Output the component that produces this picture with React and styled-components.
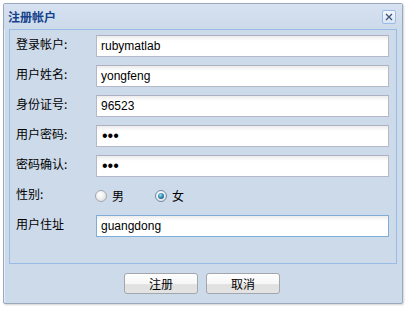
import React from 'react';
import styled, { createGlobalStyle } from 'styled-components';

const GlobalStyle = createGlobalStyle`
  html, body {
    margin: 0;
    padding: 0;
    background: #ffffff;
  }
  body {
    font-family: "Liberation Sans", "Noto Sans CJK SC", sans-serif;
    font-size: 12px;
  }
`;

const Window = styled.div`
  box-sizing: border-box;
  margin: 3px;
  width: 400px;
  height: 301px;
  border: 1px solid #9aa9bd;
  border-radius: 2px;
  background: #cddaea;
  box-shadow: inset 1px 1px 0 #e4ecf6, 1px 1px 2px rgba(0, 0, 0, 0.18);
  display: flex;
  flex-direction: column;
`;

const Header = styled.div`
  height: 25px;
  display: flex;
  align-items: center;
  justify-content: space-between;
  padding: 0 6px 0 4px;
  background: linear-gradient(#d6e2f1, #cddaea);
`;

const Title = styled.span`
  font-family: "Noto Sans CJK SC", sans-serif;
  font-weight: bold;
  font-size: 12px;
  color: #15428b;
  line-height: 14px;
`;

const CloseButton = styled.button`
  box-sizing: border-box;
  width: 14px;
  height: 14px;
  padding: 0;
  margin-top: 1px;
  border: 1px solid #99bbe8;
  border-radius: 2px;
  background: linear-gradient(#f4f8fd, #dbe6f4);
  display: flex;
  align-items: center;
  justify-content: center;
`;

const Body = styled.div`
  padding: 0 5px;
`;

const Panel = styled.div`
  box-sizing: border-box;
  height: 235px;
  border: 1px solid #99bbe8;
  padding: 5px 7px 0 6px;
  display: flex;
  flex-direction: column;
  gap: 8px;
`;

const Row = styled.div`
  display: grid;
  grid-template-columns: 80px 1fr;
  height: 22px;
`;

const Label = styled.label`
  font-family: "Noto Sans CJK SC", sans-serif;
  font-size: 12px;
  line-height: 14px;
  padding-top: 2px;
  color: #000;
`;

const Input = styled.input`
  box-sizing: border-box;
  width: 100%;
  height: 22px;
  margin: 0;
  padding: 0 4px;
  border: 1px solid ${(p) => (p.$focus ? '#7eadd9' : '#b5b8c8')};
  border-top-color: ${(p) => (p.$focus ? '#7eadd9' : '#adb0c0')};
  background: linear-gradient(#ececec 0, #ffffff 5px, #ffffff 100%);
  font-family: "Liberation Sans", sans-serif;
  font-size: 12px;
  color: #000;
  outline: none;
  &[type='password'] {
    font-size: 16px;
    padding-left: 5px;
  }
`;

const RadioGroup = styled.div`
  display: flex;
  align-items: center;
  margin-left: -1px;
  margin-top: -1px;
`;

const Option = styled.div`
  width: 60px;
  display: flex;
  align-items: center;
  gap: 5px;
  font-family: "Noto Sans CJK SC", sans-serif;
  font-size: 12px;
  color: #000;
`;

const RadioDot = styled.span`
  box-sizing: border-box;
  width: 12px;
  height: 12px;
  border-radius: 50%;
  border: 1px solid ${(p) => (p.$checked ? '#6f8aa8' : '#a2a8b0')};
  background: radial-gradient(circle at 40% 35%, #ffffff 0, #f2f2f2 40%, #d4d6d8 100%);
  display: flex;
  align-items: center;
  justify-content: center;
  &::after {
    content: '';
    display: ${(p) => (p.$checked ? 'block' : 'none')};
    width: 6px;
    height: 6px;
    border-radius: 50%;
    background: radial-gradient(circle at 40% 35%, #a8dcf0 0, #2a86b4 50%, #0f4a6e 100%);
  }
`;

const Footer = styled.div`
  display: flex;
  justify-content: center;
  gap: 8px;
  padding: 9px 2px 0 0;
`;

const Button = styled.button`
  box-sizing: border-box;
  width: 74px;
  height: 21px;
  padding: 0;
  border: 1px solid #a3a6ab;
  border-radius: 3px;
  background: linear-gradient(#ffffff 0%, #f6f6f6 52%, #e0e0e0 56%, #e4e4e4 100%);
  font-family: "Noto Sans CJK SC", sans-serif;
  font-size: 12px;
  color: #000;
  line-height: 18px;
`;

const fields = [
  { label: '登录帐户:', value: 'rubymatlab' },
  { label: '用户姓名:', value: 'yongfeng' },
  { label: '身份证号:', value: '96523' },
  { label: '用户密码:', value: '123', type: 'password' },
  { label: '密码确认:', value: '123', type: 'password' },
];

export default function App() {
  return (
    <>
      <GlobalStyle />
      <Window>
        <Header>
          <Title>注册帐户</Title>
          <CloseButton aria-label="close">
            <svg width="8" height="8" viewBox="0 0 8 8">
              <path d="M1 1 L7 7 M7 1 L1 7" stroke="#3d5478" strokeWidth="1.3" fill="none" />
            </svg>
          </CloseButton>
        </Header>
        <Body>
          <Panel>
            {fields.map((f) => (
              <Row key={f.label}>
                <Label>{f.label}</Label>
                <Input type={f.type || 'text'} defaultValue={f.value} />
              </Row>
            ))}
            <Row>
              <Label>性别:</Label>
              <RadioGroup>
                <Option>
                  <RadioDot />
                  男
                </Option>
                <Option>
                  <RadioDot $checked />
                  女
                </Option>
              </RadioGroup>
            </Row>
            <Row>
              <Label>用户住址</Label>
              <Input $focus defaultValue="guangdong" />
            </Row>
          </Panel>
        </Body>
        <Footer>
          <Button>注册</Button>
          <Button>取消</Button>
        </Footer>
      </Window>
    </>
  );
}
